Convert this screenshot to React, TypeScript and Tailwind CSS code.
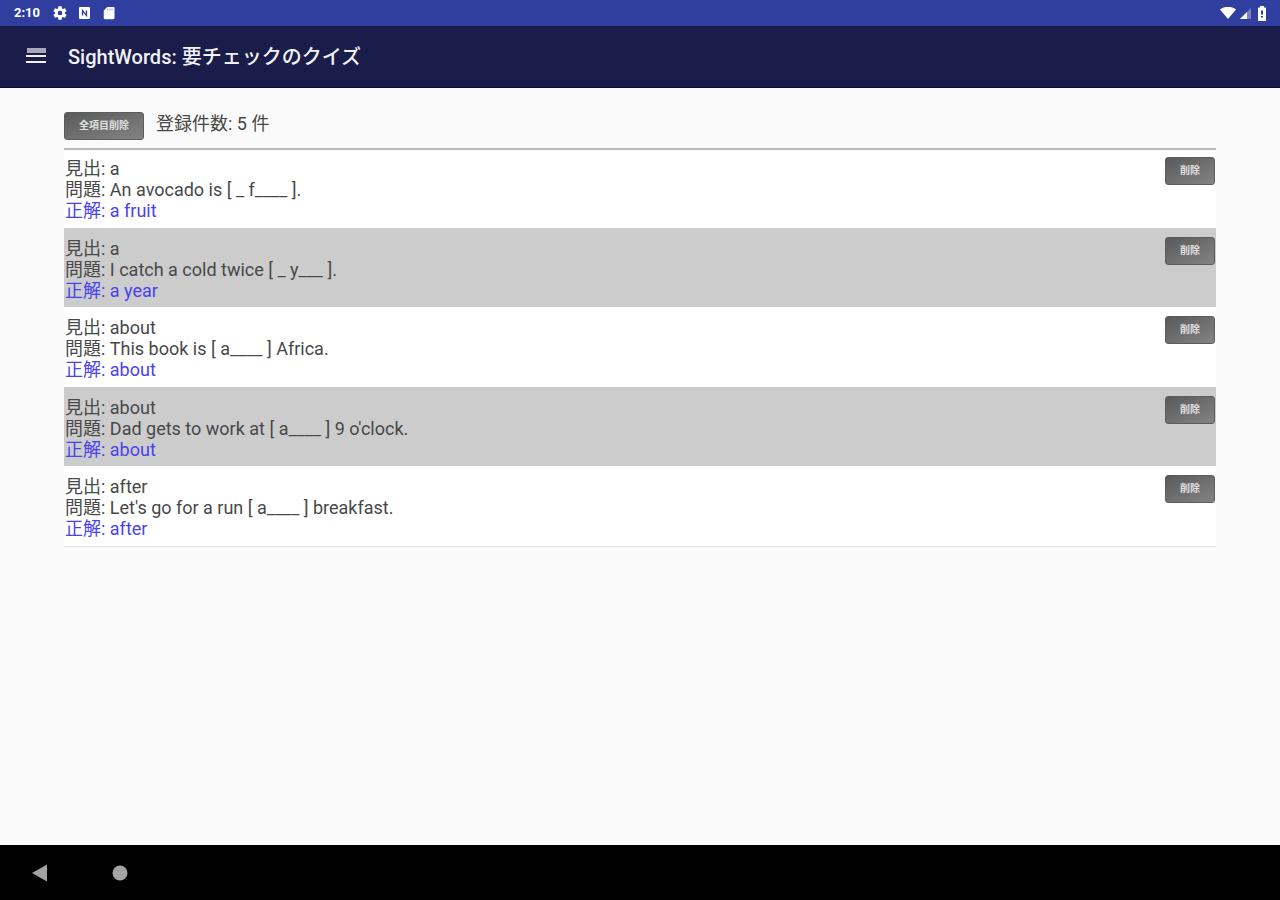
import React from "react";

type Entry = { word: string; question: string; answer: string };

const entries: Entry[] = [
  { word: "a", question: "An avocado is [ _ f____ ].", answer: "a fruit" },
  { word: "a", question: "I catch a cold twice [ _ y___ ].", answer: "a year" },
  { word: "about", question: "This book is [ a____ ] Africa.", answer: "about" },
  { word: "about", question: "Dad gets to work at [ a____ ] 9 o'clock.", answer: "about" },
  { word: "after", question: "Let's go for a run [ a____ ] breakfast.", answer: "after" },
];

function StatusBar() {
  return (
    <div className="flex h-[26px] items-center justify-between bg-[#303f9f] pr-3 pl-[14px] text-white">
      <div className="flex items-center gap-[10px]">
        <span className="w-7 text-[13px] leading-4 font-bold">2:10</span>
        <svg className="size-4" viewBox="0 0 24 24" fill="currentColor" aria-hidden="true">
          <path d="M19.43 12.98c.04-.32.07-.64.07-.98s-.03-.66-.07-.98l2.11-1.65c.19-.15.24-.42.12-.64l-2-3.46c-.12-.22-.39-.3-.61-.22l-2.49 1c-.52-.4-1.08-.73-1.69-.98l-.38-2.65C14.46 2.18 14.25 2 14 2h-4c-.25 0-.46.18-.49.42l-.38 2.65c-.61.25-1.17.59-1.69.98l-2.49-1c-.23-.09-.49 0-.61.22l-2 3.46c-.13.22-.07.49.12.64l2.11 1.65c-.04.32-.07.65-.07.98s.03.66.07.98l-2.11 1.65c-.19.15-.24.42-.12.64l2 3.46c.12.22.39.3.61.22l2.49-1c.52.4 1.08.73 1.69.98l.38 2.65c.03.24.24.42.49.42h4c.25 0 .46-.18.49-.42l.38-2.65c.61-.25 1.17-.59 1.69-.98l2.49 1c.23.09.49 0 .61-.22l2-3.46c.12-.22.07-.49-.12-.64l-2.11-1.65zM12 15.5a3.5 3.5 0 1 1 0-7 3.5 3.5 0 0 1 0 7z" />
        </svg>
        <svg className="size-[14px]" viewBox="0 0 14 14" aria-hidden="true">
          <rect x="1" y="1" width="11" height="12" rx="1" fill="#fff" />
          <path d="M4.500 9.500v-5l4 5v-5" fill="none" stroke="#303f9f" strokeWidth="1.3" />
        </svg>
        <svg className="h-[14px] w-[14px]" viewBox="0 0 16 16" aria-hidden="true">
          <path d="M6 1h7a1.300 1.300 0 0 1 1.300 1.300v11.400a1.300 1.300 0 0 1-1.300 1.300H3.300A1.300 1.300 0 0 1 2 13.700V5z" fill="#fff" />
          <path d="M6.500 3v2M9 3v2M11.500 3v2" stroke="#303f9f" strokeWidth="1" opacity=".6" />
        </svg>
      </div>
      <div className="flex items-center gap-1">
        <svg className="h-3 w-4" viewBox="0 0 16 12" fill="currentColor" aria-hidden="true">
          <path d="M0 2.500C4.500-1 11.500-1 16 2.500L8 12z" />
        </svg>
        <svg className="size-3" viewBox="0 0 12 12" fill="currentColor" aria-hidden="true">
          <path d="M11 1v11H0z" opacity=".35" />
          <path d="M7 5v7H0z" />
        </svg>
        <svg className="h-[15px] w-3" viewBox="0 0 12 15" aria-hidden="true">
          <path d="M4 0h4v1.500h1.500q.5 0 .5.500v12.500q0 .5-.5.500h-7q-.5 0-.5-.5V2q0-.5.5-.5H4z" fill="#fff" />
          <path d="M5 4.500h2v4H5zM5 10h2v1.500H5z" fill="#303f9f" />
        </svg>
      </div>
    </div>
  );
}

function GrayButton({ children, className }: { children: React.ReactNode; className: string }) {
  return (
    <button
      type="button"
      className={`h-7 shrink-0 rounded-[3px] border border-[#5c5c5c] bg-linear-to-br from-[#5a5a5a] to-[#848484] text-[10px] leading-4 font-bold text-[#e0e0e0] ${className}`}
    >
      {children}
    </button>
  );
}

export default function App() {
  return (
    <div className="flex min-h-screen flex-col bg-[#fafafa] font-[Roboto,'Noto_Sans_CJK_JP',sans-serif] text-[#484848]">
      <StatusBar />
      <header className="flex h-[62px] items-center gap-5 border-b border-[#0c0d3c] bg-[#1a1c49] pl-6 text-[#f2f2f6]">
        <button type="button" aria-label="メニュー" className="size-6">
          <svg className="size-6" viewBox="0 0 24 24" fill="currentColor" aria-hidden="true">
            <path d="M3 3h19v5H3z" opacity=".65" />
            <path d="M2 10h20v2H2zM2 16h20v2H2z" />
          </svg>
        </button>
        <h1 className="text-xl font-medium">SightWords: 要チェックのクイズ</h1>
      </header>

      <main className="flex-1 px-[5%] pt-6">
        <div className="flex items-start gap-3 pb-2">
          <GrayButton className="w-20">全項目削除</GrayButton>
          <p className="text-lg leading-6">登録件数: 5 件</p>
        </div>
        <ul className="border-b border-[#e4e4e4]">
          {entries.map((e, i) => (
            <li
              key={i}
              className="flex items-start justify-between border-t-2 border-transparent bg-white px-px pt-[7px] pb-[7px] text-lg leading-[21px] first:border-[#b8b8b8] even:bg-[#cccccc] even:pb-[6px]"
            >
              <div className="pt-px">
                <p>見出: {e.word}</p>
                <p>問題: {e.question}</p>
                <p className="text-[#4a41f0]">正解: {e.answer}</p>
              </div>
              <GrayButton className="w-[50px]">削除</GrayButton>
            </li>
          ))}
        </ul>
      </main>

      <nav className="flex h-[55px] items-center gap-14 bg-black pl-7 text-[#a3a3a3]">
        <button type="button" aria-label="戻る" className="size-6">
          <svg className="size-6" viewBox="0 0 24 24" fill="currentColor" aria-hidden="true">
            <path d="M4 12 19 3.500v17z" />
          </svg>
        </button>
        <button type="button" aria-label="ホーム" className="size-6">
          <svg className="size-6" viewBox="0 0 24 24" fill="currentColor" aria-hidden="true">
            <circle cx="12" cy="12" r="7.500" />
          </svg>
        </button>
      </nav>
    </div>
  );
}
